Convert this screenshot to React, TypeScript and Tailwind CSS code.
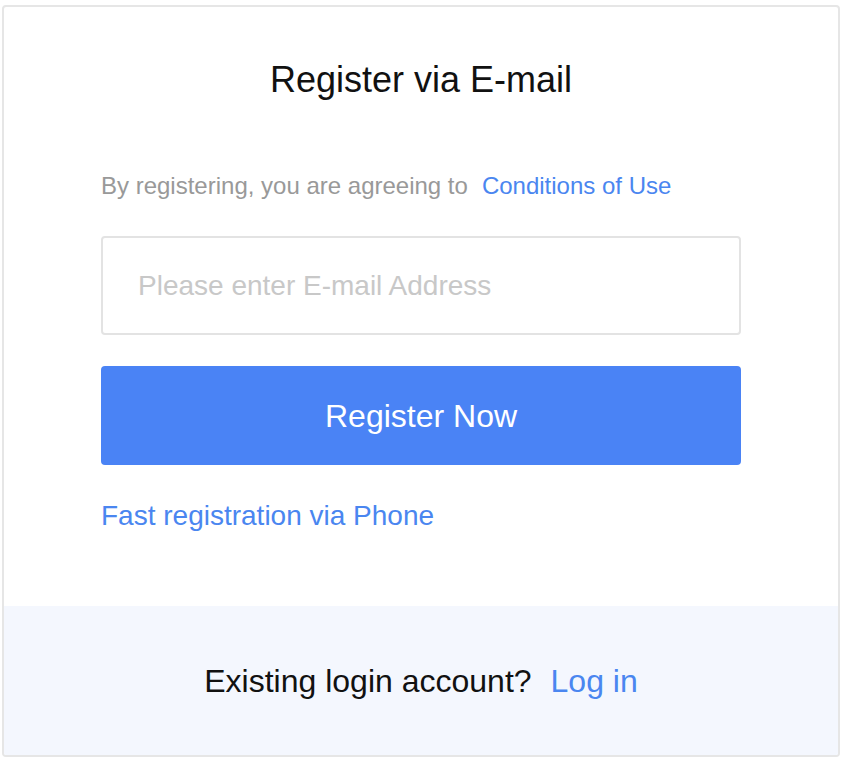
import { useState } from 'react';

export default function App() {
  const [email, setEmail] = useState('');

  return (
    <div className="min-h-screen bg-white font-['Liberation_Sans',Arial,sans-serif]">
      <div className="ml-[2px] pt-[5px]">
        <div className="w-[838px] h-[752px] border-2 border-[#e6e6e6] rounded-[4px] flex flex-col overflow-hidden bg-white">
          {/* form */}
          <div className="flex-1 flex flex-col px-[97px] pt-[53px]">
            <h1 className="h-[40px] leading-[40px] text-[36px] text-center text-[#111]">
              Register via E-mail
            </h1>

            <p className="mt-[71px] h-[30px] leading-[30px] text-[24px] text-[#999]">
              By registering, you are agreeing to
              <a href="#" className="ml-[14px] text-[#4a86f0]">
                Conditions of Use
              </a>
            </p>

            <input
              type="email"
              value={email}
              onChange={(e) => setEmail(e.target.value)}
              placeholder="Please enter E-mail Address"
              className="mt-[35px] h-[99px] w-full border-2 border-[#e3e3e3] rounded-[4px] px-[35px] text-[28px] text-[#333] placeholder:text-[#c8c8c8] outline-none"
            />

            <button className="mt-[31px] h-[99px] w-full rounded-[4px] bg-[#4a83f5] text-white text-[32px]">
              Register Now
            </button>

            <a href="#" className="mt-[34px] h-[34px] leading-[34px] text-[28px] text-[#4a86f0] self-start">
              Fast registration via Phone
            </a>
          </div>

          {/* footer */}
          <div className="h-[149px] bg-[#f4f7fe] flex items-center justify-center text-[32px]">
            <span className="text-[#111]">Existing login account?</span>
            <a href="#" className="ml-[19px] text-[#4a86f0]">
              Log in
            </a>
          </div>
        </div>
      </div>
    </div>
  );
}
